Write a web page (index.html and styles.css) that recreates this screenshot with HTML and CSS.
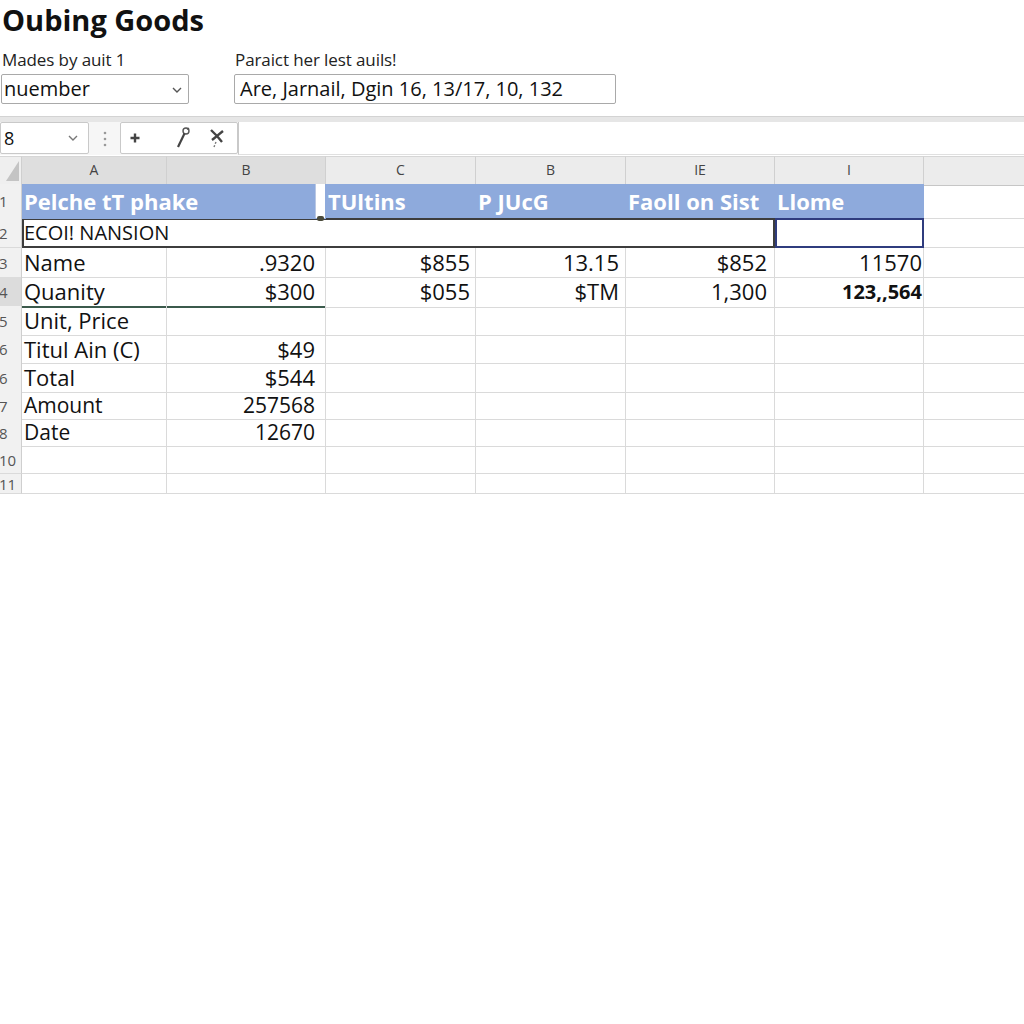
FILE: index.html
```html
<!DOCTYPE html>
<html>
<head>
<meta charset="utf-8">
<link rel="stylesheet" href="styles.css">
</head>
<body>
<header class="top">
  <h1 class="title">Oubing Goods</h1>
  <div class="fields">
    <div class="field field-a">
      <div class="label">Mades by auit 1</div>
      <div class="select"><span>nuember</span>
        <svg class="chev" width="10" height="6" viewBox="0 0 10 6"><path d="M1 1 L5 5 L9 1" fill="none" stroke="#555" stroke-width="1.4"/></svg>
      </div>
    </div>
    <div class="field field-b">
      <div class="label">Paraict her lest auils!</div>
      <div class="input">Are, Jarnail, Dgin 16, 13/17, 10, 132</div>
    </div>
  </div>
</header>

<div class="band"></div>
<div class="toolbar">
  <div class="namebox"><span>8</span>
    <svg class="chev" width="10" height="6" viewBox="0 0 10 6"><path d="M1 1 L5 5 L9 1" fill="none" stroke="#777" stroke-width="1.4"/></svg>
  </div>
  <div class="dots">
    <svg width="6" height="18" viewBox="0 0 6 18"><circle cx="3" cy="3" r="1.3" fill="#999"/><circle cx="3" cy="9" r="1.3" fill="#999"/><circle cx="3" cy="15" r="1.3" fill="#999"/></svg>
  </div>
  <div class="fx">
    <svg class="ic ic-plus" width="12" height="12" viewBox="0 0 12 12"><path d="M6 1.5 V10.5 M1.5 6 H10.5" stroke="#444" stroke-width="2.4"/></svg>
    <svg class="ic ic-pen" width="18" height="24" viewBox="0 0 18 24"><circle cx="12" cy="5" r="3" fill="none" stroke="#555" stroke-width="1.4"/><path d="M10.5 7.5 L4 21" stroke="#444" stroke-width="2.2"/><path d="M13 3.5 L15 2" stroke="#555" stroke-width="1.2"/></svg>
    <svg class="ic ic-x" width="18" height="22" viewBox="0 0 18 22"><path d="M3 3 L9 9 L15 4 M9 9 L14 15 M9 9 L4 13" fill="none" stroke="#444" stroke-width="2.4"/><path d="M8 15 L6 20" stroke="#777" stroke-width="1.4" stroke-dasharray="2 1.5"/></svg>
  </div>
  <div class="formula"></div>
</div>

<div class="sheet">
  <div class="row hdr">
    <div class="corner"><svg width="22" height="28" viewBox="0 0 22 28"><path d="M19 4 L19 24 L6 24 Z" fill="#c4c4c4"/></svg></div>
    <div class="ch sel">A</div>
    <div class="ch sel">B</div>
    <div class="ch">C</div>
    <div class="ch">B</div>
    <div class="ch">IE</div>
    <div class="ch">I</div>
    <div class="ch last"></div>
  </div>

  <div class="row r1">
    <div class="rh">1</div>
    <div class="c blue span2">Pelche tT phake</div>
    <div class="c blue">TUltins</div>
    <div class="c blue">P JUcG</div>
    <div class="c blue">Faoll on Sist</div>
    <div class="c blue">Llome</div>
    <div class="c last"></div>
  </div>

  <div class="row r2">
    <div class="rh">2</div>
    <div class="c merged">ECOI! NANSION</div>
    <div class="c active"></div>
    <div class="c last"></div>
  </div>

  <div class="row r3">
    <div class="rh">3</div>
    <div class="c">Name</div>
    <div class="c num nb">.9320</div>
    <div class="c num nc">$855</div>
    <div class="c num nd">13.15</div>
    <div class="c num ne">$852</div>
    <div class="c num nf">11570</div>
    <div class="c last"></div>
  </div>

  <div class="row r4">
    <div class="rh dark">4</div>
    <div class="c under">Quanity</div>
    <div class="c num nb under">$300</div>
    <div class="c num nc">$055</div>
    <div class="c num nd">$TM</div>
    <div class="c num ne">1,300</div>
    <div class="c num nf bold">123,,564</div>
    <div class="c last"></div>
  </div>

  <div class="row r5">
    <div class="rh">5</div>
    <div class="c">Unit, Price</div>
    <div class="c"></div><div class="c"></div><div class="c"></div><div class="c"></div><div class="c"></div>
    <div class="c last"></div>
  </div>

  <div class="row r6">
    <div class="rh">6</div>
    <div class="c">Titul Ain (C)</div>
    <div class="c num nb">$49</div>
    <div class="c"></div><div class="c"></div><div class="c"></div><div class="c"></div>
    <div class="c last"></div>
  </div>

  <div class="row r6b">
    <div class="rh">6</div>
    <div class="c">Total</div>
    <div class="c num nb">$544</div>
    <div class="c"></div><div class="c"></div><div class="c"></div><div class="c"></div>
    <div class="c last"></div>
  </div>

  <div class="row r7">
    <div class="rh">7</div>
    <div class="c">Amount</div>
    <div class="c num nb">257568</div>
    <div class="c"></div><div class="c"></div><div class="c"></div><div class="c"></div>
    <div class="c last"></div>
  </div>

  <div class="row r8">
    <div class="rh">8</div>
    <div class="c">Date</div>
    <div class="c num nb">12670</div>
    <div class="c"></div><div class="c"></div><div class="c"></div><div class="c"></div>
    <div class="c last"></div>
  </div>

  <div class="row r10">
    <div class="rh">10</div>
    <div class="c"></div><div class="c"></div><div class="c"></div><div class="c"></div><div class="c"></div><div class="c"></div>
    <div class="c last"></div>
  </div>

  <div class="row r11">
    <div class="rh">11</div>
    <div class="c"></div><div class="c"></div><div class="c"></div><div class="c"></div><div class="c"></div><div class="c"></div>
    <div class="c last"></div>
  </div>
</div>
</body>
</html>
```

FILE: styles.css
```css
* { box-sizing: border-box; }
html, body { margin: 0; padding: 0; background: #fff; }
body {
  font-family: "Open Sans", "Noto Sans", sans-serif;
  color: #111;
  width: 1024px;
  height: 1024px;
  overflow: hidden;
}

.top { padding-left: 2px; }
.title {
  margin: 0;
  font-size: 29px;
  line-height: 40px;
  font-weight: 700;
  color: #111;
}
.fields {
  display: flex;
  margin-top: 10px;
}
.field-a { width: 188px; margin-left: -1px; }
.field-b { width: 382px; margin-left: 45px; }
.label {
  font-size: 17px;
  line-height: 20px;
  color: #222;
  padding-left: 1px;
  margin-bottom: 4px;
  letter-spacing: -0.1px;
}
.select, .input {
  height: 30px;
  border: 1px solid #a9a9a9;
  border-radius: 2px;
  font-size: 20px;
  line-height: 28px;
  color: #111;
  background: #fff;
}
.select {
  display: flex;
  align-items: center;
  justify-content: space-between;
  padding: 0 6px 0 2px;
}
.select .chev { margin-top: 2px; }
.input { padding-left: 5px; }

.band {
  margin-top: 12px;
  height: 6px;
  background: #e6e6e6;
  border-top: 1px solid #d3d3d3;
}
.toolbar {
  display: flex;
  align-items: stretch;
  height: 33px;
  background: #f6f6f6;
}
.namebox {
  width: 89px;
  border: 1px solid #c9c9c9;
  border-radius: 2px;
  background: #fff;
  display: flex;
  align-items: center;
  justify-content: space-between;
  padding: 0 10px 0 3px;
  font-size: 18px;
  margin-bottom: 1px;
}
.dots {
  width: 31px;
  display: flex;
  align-items: center;
  justify-content: center;
}
.fx {
  width: 118px;
  border: 1px solid #c9c9c9;
  border-radius: 2px;
  background: #fff;
  display: flex;
  align-items: center;
  padding-left: 8px;
  margin-bottom: 1px;
}
.ic-pen { margin-left: 33px; }
.ic-x { margin-left: 16px; }
.formula {
  flex: 1;
  background: #fff;
  border-left: 1px solid #c9c9c9;
  border-bottom: 1px solid #e0e0e0;
}

.sheet { margin-top: 1px; }
.row {
  display: grid;
  grid-template-columns: 22px 145px 159px 150px 150px 149px 149px 100px;
  font-size: 22px;
}
.hdr { height: 28px; }
.r1 { height: 34px; }
.r2 { height: 30px; }
.r3 { height: 29px; }
.r4 { height: 29px; }
.r5 { height: 29px; }
.r6 { height: 28px; }
.r6b { height: 29px; }
.r7 { height: 27px; }
.r8 { height: 27px; }
.r10 { height: 28px; }
.r11 { height: 20px; overflow: hidden; }

.corner {
  background: #efefef;
  border-right: 1px solid #cfcfcf;
  border-bottom: 1px solid #c6c6c6;
  border-top: 1px solid #d6d6d6;
}
.corner svg { display: block; }
.ch {
  background: #ececec;
  border-top: 1px solid #d6d6d6;
  border-right: 1px solid #d0d0d0;
  border-bottom: 1px solid #c6c6c6;
  font-size: 14px;
  line-height: 26px;
  text-align: center;
  color: #444;
}
.ch.sel { background: #dedede; }
.ch.last { border-right: none; }

.rh {
  background: #f1f1f1;
  border-right: 1px solid #cfcfcf;
  border-bottom: 1px solid #dadada;
  font-size: 15px;
  color: #555;
  text-indent: -1px;
  display: flex;
  align-items: center;
  overflow: hidden;
}
.rh.dark { background: #dcdcdc; }

.c {
  border-right: 1px solid #dadada;
  border-bottom: 1px solid #dadada;
  padding-left: 2px;
  white-space: nowrap;
  color: #111;
}
.r1 .c { line-height: 34px; }
.r2 .c { line-height: 28px; }
.r3 .c, .r4 .c, .r5 .c, .r6b .c { line-height: 29px; }
.r6 .c { line-height: 28px; }
.r7 .c, .r8 .c { line-height: 27px; font-size: 21px; }
.c.last { border-right: none; }

.blue {
  background: #8eaadc;
  border-right-color: #8eaadc;
  border-bottom-color: #8eaadc;
  color: #fff;
  font-weight: 700;
}
.span2 {
  grid-column: span 2;
  position: relative;
}
.span2::after {
  content: "";
  position: absolute;
  right: 0;
  top: 0;
  width: 9px;
  height: 34px;
  background: #fff;
  border-left: 1px solid #b9c7e3;
}
.span2::before {
  content: "";
  position: absolute;
  right: 1px;
  bottom: -3px;
  width: 7px;
  height: 5px;
  background: #4a4a3a;
  border-radius: 2px;
  z-index: 2;
}

.merged {
  grid-column: span 5;
  border: 2px solid #3d3d3d;
  font-size: 20px;
  line-height: 26px !important;
  padding-left: 0;
}
.active {
  border: 2px solid #2f3c7e;
}

.num { text-align: right; }
.nb { padding-right: 10px; }
.nc { padding-right: 5px; }
.nd { padding-right: 6px; }
.ne { padding-right: 7px; }
.nf { padding-right: 1px; }
.bold { font-weight: 700; font-size: 20px; }
.under { border-bottom: 2px solid #3b5a4c; }
```
